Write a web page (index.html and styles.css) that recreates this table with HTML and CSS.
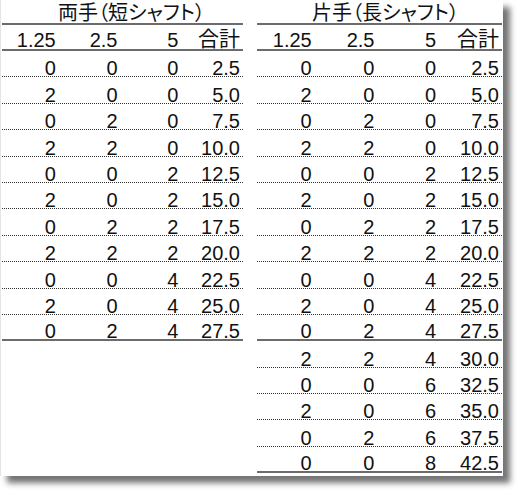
FILE: index.html
```html
<!DOCTYPE html>
<html lang="ja">
<head>
<meta charset="utf-8">
<link rel="stylesheet" href="styles.css">
</head>
<body>
<div class="card">
  <div class="tbl tbl-left">
    <div class="title">両手（短シャフト）</div>
    <div class="row head"><span>1.25</span><span>2.5</span><span>5</span><span class="jp">合計</span></div>
    <div class="row"><span>0</span><span>0</span><span>0</span><span>2.5</span></div>
    <div class="row"><span>2</span><span>0</span><span>0</span><span>5.0</span></div>
    <div class="row"><span>0</span><span>2</span><span>0</span><span>7.5</span></div>
    <div class="row"><span>2</span><span>2</span><span>0</span><span>10.0</span></div>
    <div class="row"><span>0</span><span>0</span><span>2</span><span>12.5</span></div>
    <div class="row"><span>2</span><span>0</span><span>2</span><span>15.0</span></div>
    <div class="row"><span>0</span><span>2</span><span>2</span><span>17.5</span></div>
    <div class="row"><span>2</span><span>2</span><span>2</span><span>20.0</span></div>
    <div class="row"><span>0</span><span>0</span><span>4</span><span>22.5</span></div>
    <div class="row"><span>2</span><span>0</span><span>4</span><span>25.0</span></div>
    <div class="row solid"><span>0</span><span>2</span><span>4</span><span>27.5</span></div>
  </div>
  <div class="tbl tbl-right">
    <div class="title">片手（長シャフト）</div>
    <div class="row head"><span>1.25</span><span>2.5</span><span>5</span><span class="jp">合計</span></div>
    <div class="row"><span>0</span><span>0</span><span>0</span><span>2.5</span></div>
    <div class="row"><span>2</span><span>0</span><span>0</span><span>5.0</span></div>
    <div class="row"><span>0</span><span>2</span><span>0</span><span>7.5</span></div>
    <div class="row"><span>2</span><span>2</span><span>0</span><span>10.0</span></div>
    <div class="row"><span>0</span><span>0</span><span>2</span><span>12.5</span></div>
    <div class="row"><span>2</span><span>0</span><span>2</span><span>15.0</span></div>
    <div class="row"><span>0</span><span>2</span><span>2</span><span>17.5</span></div>
    <div class="row"><span>2</span><span>2</span><span>2</span><span>20.0</span></div>
    <div class="row"><span>0</span><span>0</span><span>4</span><span>22.5</span></div>
    <div class="row"><span>2</span><span>0</span><span>4</span><span>25.0</span></div>
    <div class="row solid"><span>0</span><span>2</span><span>4</span><span>27.5</span></div>
    <div class="row"><span>2</span><span>2</span><span>4</span><span>30.0</span></div>
    <div class="row"><span>0</span><span>0</span><span>6</span><span>32.5</span></div>
    <div class="row"><span>2</span><span>0</span><span>6</span><span>35.0</span></div>
    <div class="row"><span>0</span><span>2</span><span>6</span><span>37.5</span></div>
    <div class="row solid"><span>0</span><span>0</span><span>8</span><span>42.5</span></div>
  </div>
</div>
</body>
</html>
```
FILE: styles.css
```css
html, body {
  margin: 0;
  padding: 0;
  background: #ffffff;
}
body {
  width: 518px;
  height: 490px;
  overflow: hidden;
  font-family: "Liberation Sans", "Noto Sans CJK JP", sans-serif;
  color: #111111;
}
.card {
  width: 503px;
  height: 476px;
  box-sizing: border-box;
  background: #ffffff;
  border-left: 1px solid #e4e4e4;
  box-shadow: 7px 7px 6px rgba(0, 0, 0, 0.55);
  display: flex;
  align-items: flex-start;
  padding-left: 1px;
  gap: 14px;
}
.tbl {
  display: flex;
  flex-direction: column;
}
.tbl-left { width: 241px; }
.tbl-right { width: 245px; }
.title {
  height: 25px;
  box-sizing: border-box;
  border-bottom: 2px solid #6b6b6b;
  text-align: center;
  font-family: "Liberation Sans", "Noto Sans CJK JP", sans-serif;
  font-feature-settings: "palt";
  font-size: 20px;
  line-height: 20px;
  padding-top: 3px;
}
.tbl-left .title { padding-left: 18px; }
.tbl-right .title { padding-left: 12px; }
.row {
  height: 26.4px;
  box-sizing: border-box;
  display: grid;
  grid-template-columns: 57fr 62fr 61fr 62fr;
  align-items: end;
  border-bottom: 1px dotted #333333;
  font-size: 20px;
  line-height: 16px;
}
.row span {
  text-align: right;
  padding-right: 3px;
}
.row.head {
  height: 26px;
  padding-bottom: 1px;
  border-bottom: 2px solid #6b6b6b;
}
.row.solid {
  border-bottom: 2px solid #6b6b6b;
}
.jp {
  font-family: "Noto Sans CJK JP", sans-serif;
  font-size: 21px;
  line-height: 22px;
}
```
